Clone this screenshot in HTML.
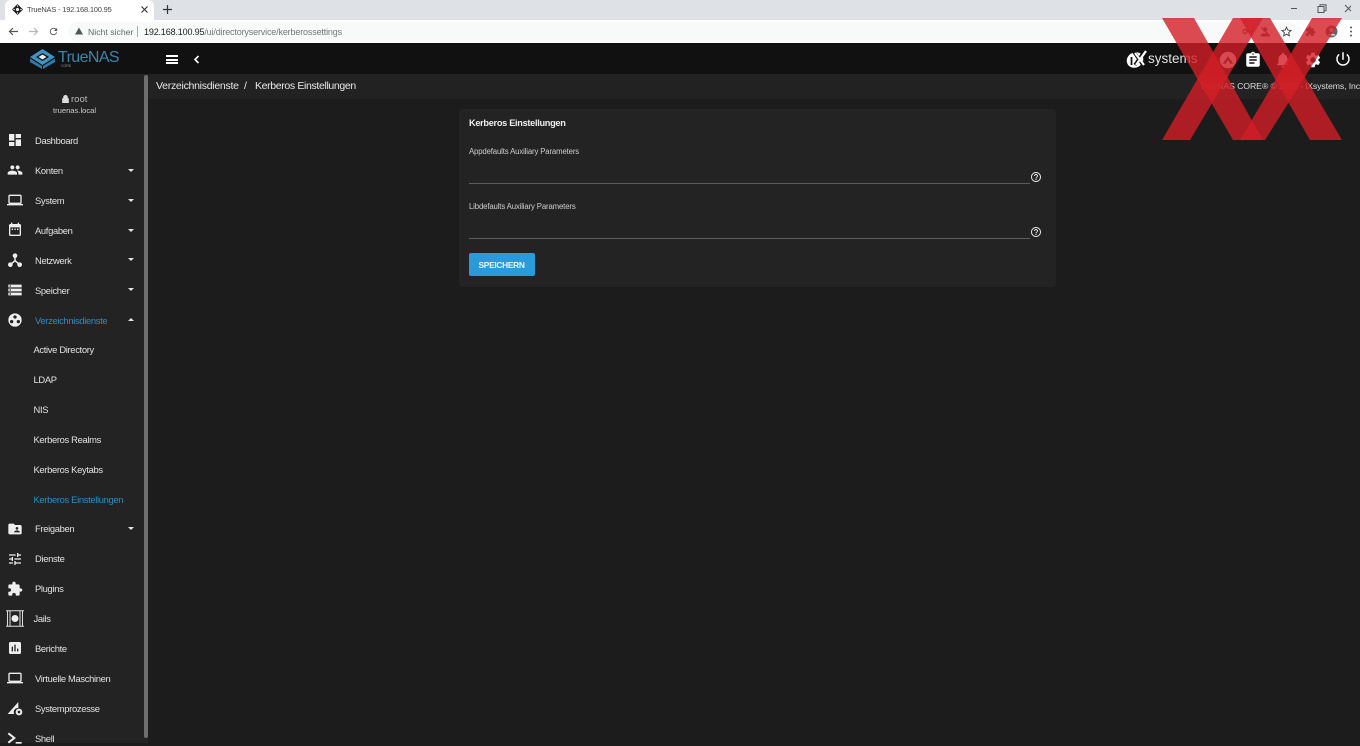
<!DOCTYPE html>
<html lang="de"><head><meta charset="utf-8"><title>TrueNAS - 192.168.100.95</title>
<style>
html,body{margin:0;padding:0;width:1360px;height:743px;overflow:hidden;background:#1c1c1c;font-family:"Liberation Sans",sans-serif;color:#e6e6e6}
div,span,svg{position:absolute}
.t{white-space:nowrap;font-size:9.5px;line-height:12px}
.s{margin-top:1px;font-size:9.4px;letter-spacing:-.33px;color:#e2e2e2}
.i{fill:#eee;width:16px;height:16px;left:7px}
.a{width:0;height:0;left:128px;border-left:3.5px solid transparent;border-right:3.5px solid transparent;border-top:3.5px solid #e4e4e4}
.l{height:1px;background:#5c5c5c;left:469px;width:561px}
.lb{font-size:7.8px;letter-spacing:-.15px;color:#ccc}
</style></head><body>
<!-- browser chrome -->
<div style="left:0;top:0;width:1360px;height:20px;background:#dee1e6"></div>
<div style="left:5px;top:0;width:149px;height:20px;background:#fff;border-radius:6px 6px 0 0"></div>
<svg style="left:12px;top:4px;width:11px;height:11px" viewBox="0 0 12 12"><path d="M6 0L12 6L6 12L0 6Z" fill="#222"/><circle cx="6" cy="6" r="1.7" fill="#fff"/><path d="M6 1.5V3M1.500 6H3M9 6h1.500M6 9v1.500" stroke="#fff"/></svg>
<span class="t" style="left:27px;top:4px;font-size:7.5px;letter-spacing:-.2px;color:#444">TrueNAS - 192.168.100.95</span>
<svg style="left:141px;top:6px;width:7px;height:7px" viewBox="0 0 7 7"><path d="M.5.5l6 6M6.500.5l-6 6" stroke="#333" stroke-width="1.100"/></svg>
<svg style="left:163px;top:5px;width:9px;height:9px" viewBox="0 0 9 9"><path d="M4.500 0v9M0 4.500h9" stroke="#333" stroke-width="1.200"/></svg>
<svg style="left:1291px;top:4px;width:60px;height:10px" viewBox="0 0 60 10"><path d="M0 4.500h6" stroke="#555"/><path d="M27 2.500h6v6h-6zM29 2.500V.8h6v6h-2" fill="none" stroke="#555"/><path d="M54 1l7 7M61 1l-7 7" stroke="#555"/></svg>
<div style="left:0;top:20px;width:1360px;height:23px;background:#fff"></div>
<div style="left:68px;top:22px;width:1230px;height:19px;background:#f8f9f9;border-radius:10px"></div>
<svg style="left:8px;top:26px;width:11px;height:11px" viewBox="0 0 11 11"><path d="M10 5.500H2M5 2L1.500 5.500L5 9" fill="none" stroke="#555" stroke-width="1.200"/></svg>
<svg style="left:28px;top:26px;width:11px;height:11px" viewBox="0 0 11 11"><path d="M1 5.500h8M6 2l3.500 3.500L6 9" fill="none" stroke="#b5b5b5" stroke-width="1.200"/></svg>
<svg style="left:48px;top:26px;width:11px;height:11px" viewBox="0 0 24 24"><path d="M17.650 6.350A7.958 7.958 0 0012 4c-4.420 0-7.990 3.580-7.990 8s3.570 8 7.990 8c3.730 0 6.840-2.550 7.730-6h-2.080A5.990 5.990 0 0112 18c-3.310 0-6-2.690-6-6s2.690-6 6-6c1.660 0 3.140.69 4.220 1.780L13 11h7V4l-2.350 2.350z" fill="#555"/></svg>
<svg style="left:75px;top:27px;width:8px;height:8px" viewBox="0 0 8 8"><path d="M4 .5L8 7.500H0Z" fill="#555"/></svg>
<span class="t" style="left:88px;top:26px;font-size:8.700px;color:#666">Nicht sicher</span>
<div style="left:137px;top:26px;width:1px;height:11px;background:#aaa"></div>
<span class="t" style="left:144px;top:26px;font-size:9px;letter-spacing:-.16px;color:#777"><span style="position:static;color:#222">192.168.100.95</span>/ui/directoryservice/kerberossettings</span>
<svg style="left:1242px;top:26px;width:11px;height:11px" viewBox="0 0 11 11"><circle cx="3" cy="5.500" r="2" fill="none" stroke="#555" stroke-width="1.200"/><path d="M5 5.500h6M9 5.500v2" stroke="#555" stroke-width="1.200"/></svg>
<svg style="left:1260px;top:26px;width:11px;height:11px" viewBox="0 0 11 11"><circle cx="5" cy="3.500" r="2.200" fill="#555"/><path d="M1 10c0-3 8-3 8 0zM1 1l9 9" fill="#555" stroke="#555"/></svg>
<svg style="left:1281px;top:26px;width:11px;height:11px" viewBox="0 0 24 24"><path d="M12 2.500l2.900 6.500 7.100.7-5.300 4.800 1.500 7-6.200-3.600-6.200 3.600 1.500-7L2 9.700l7.100-.7z" fill="none" stroke="#444" stroke-width="2"/></svg>
<svg style="left:1305px;top:26px;width:11px;height:11px;fill:#555" viewBox="0 0 24 24"><path d="M20.500 11H19V7c0-1.100-.9-2-2-2h-4V3.500C13 2.120 11.880 1 10.500 1S8 2.120 8 3.500V5H4c-1.100 0-1.990.9-1.990 2v3.800H3.500c1.490 0 2.700 1.210 2.700 2.700s-1.210 2.700-2.700 2.700H2V20c0 1.100.9 2 2 2h3.800v-1.500c0-1.490 1.210-2.700 2.700-2.700 1.490 0 2.700 1.210 2.700 2.700V22H17c1.100 0 2-.9 2-2v-4h1.500c1.380 0 2.500-1.120 2.500-2.500S21.880 11 20.500 11z"/></svg>
<svg style="left:1325px;top:25px;width:13px;height:13px" viewBox="0 0 13 13"><circle cx="6.500" cy="6.500" r="6" fill="#666"/><circle cx="6.500" cy="5" r="2" fill="#ddd"/><path d="M2.500 10.500c1-2.500 7-2.500 8 0" fill="#ddd"/></svg>
<svg style="left:1348px;top:26px;width:6px;height:11px" viewBox="0 0 6 11"><circle cx="3" cy="1.500" r="1" fill="#555"/><circle cx="3" cy="5.500" r="1" fill="#555"/><circle cx="3" cy="9.500" r="1" fill="#555"/></svg>
<!-- top bar -->
<div style="left:0;top:43px;width:1360px;height:31px;background:#111"></div>
<svg style="left:30px;top:49px;width:25px;height:20px" viewBox="0 0 25 20"><path d="M12.500 0L25 8 12.500 16 0 8Z" fill="#3f92c4"/><path d="M12.500 4L19 8 12.500 12 6 8Z" fill="#111"/><path d="M12.500 5.500L16.500 8 12.500 10.500 8.500 8Z" fill="#e8eef2"/><path d="M0 9.500L12 17V20L0 13ZM25 9.500L13 17V20L25 13Z" fill="#2e7cac"/></svg>
<span class="t" style="left:58px;top:47px;font-size:16px;letter-spacing:-.6px;line-height:22px;color:#3c85ad">TrueNAS</span>
<span class="t" style="left:61px;top:64px;font-size:3.500px;line-height:4px;color:#999">CORE</span>
<div style="left:166px;top:55px;width:12px;height:2px;background:#fff"></div>
<div style="left:166px;top:58.500px;width:12px;height:2px;background:#fff"></div>
<div style="left:166px;top:62px;width:12px;height:2px;background:#fff"></div>
<svg style="left:193px;top:55px;width:7px;height:9px" viewBox="0 0 7 9"><path d="M5.500 1L2 4.500 5.500 8" fill="none" stroke="#fff" stroke-width="1.600"/></svg>
<svg style="left:1126px;top:50px;width:22px;height:18px" viewBox="0 0 22 18"><ellipse cx="9" cy="10" rx="8.500" ry="7.500" fill="#fff" transform="rotate(-30 9 10)"/><path d="M5.500 7v8" stroke="#111" stroke-width="1.800"/><path d="M8 2l9 13M18 2L9 15" stroke="#111" stroke-width="3.500"/><path d="M9 3l9 12M20 1L10 15" stroke="#fff" stroke-width="2.200"/></svg>
<span class="t" style="left:1148px;top:50px;font-size:13.500px;line-height:18px;color:#e2e2e2">systems</span>
<svg style="left:1219px;top:51px;width:18px;height:18px" viewBox="0 0 24 24"><circle cx="12" cy="12" r="11" fill="#eee"/><path d="M5 17l7-10 7 10h-4l-3-5-3 5z" fill="#333"/></svg>
<svg style="left:1244px;top:51px;width:18px;height:18px;fill:#fff" viewBox="0 0 24 24"><path d="M19 3h-4.180C14.400 1.840 13.300 1 12 1c-1.300 0-2.400.84-2.820 2H5c-1.100 0-2 .9-2 2v14c0 1.100.9 2 2 2h14c1.100 0 2-.9 2-2V5c0-1.100-.9-2-2-2zm-7 0c.55 0 1 .45 1 1s-.45 1-1 1-1-.45-1-1 .45-1 1-1zm2 14H7v-2h7v2zm3-4H7v-2h10v2zm0-4H7V7h10v2z"/></svg>
<svg style="left:1274px;top:51px;width:18px;height:18px;fill:#fff" viewBox="0 0 24 24"><path d="M12 22c1.100 0 2-.9 2-2h-4c0 1.100.89 2 2 2zm6-6v-5c0-3.070-1.640-5.640-4.500-6.320V4c0-.83-.67-1.500-1.500-1.500s-1.500.67-1.500 1.500v.68C7.630 5.360 6 7.920 6 11v5l-2 2v1h16v-1l-2-2z"/></svg>
<svg style="left:1304px;top:51px;width:18px;height:18px;fill:#fff" viewBox="0 0 24 24"><path d="M19.140 12.940c.04-.3.06-.61.06-.94 0-.32-.02-.64-.07-.94l2.030-1.580c.18-.14.23-.41.12-.61l-1.920-3.320c-.12-.22-.37-.29-.59-.22l-2.390.96c-.5-.38-1.030-.7-1.620-.94l-.36-2.540c-.04-.24-.24-.41-.48-.41h-3.840c-.24 0-.43.17-.47.41l-.36 2.540c-.59.24-1.130.57-1.620.94l-2.390-.96c-.22-.08-.47 0-.59.22L2.740 8.870c-.12.21-.08.47.12.61l2.030 1.580c-.05.3-.09.63-.09.94s.02.64.07.94l-2.030 1.580c-.18.14-.23.41-.12.61l1.920 3.320c.12.22.37.29.59.22l2.390-.96c.5.38 1.030.7 1.620.94l.36 2.540c.05.24.24.41.48.41h3.840c.24 0 .44-.17.47-.41l.36-2.540c.59-.24 1.130-.56 1.620-.94l2.390.96c.22.08.47 0 .59-.22l1.920-3.320c.12-.22.07-.47-.12-.61l-2.010-1.580zM12 15.600c-1.980 0-3.600-1.620-3.600-3.600s1.620-3.600 3.600-3.600 3.600 1.620 3.600 3.600-1.620 3.600-3.600 3.600z"/></svg>
<svg style="left:1334px;top:50px;width:18px;height:18px;fill:#fff" viewBox="0 0 24 24"><path d="M13 3h-2v10h2V3zm4.830 2.170l-1.420 1.420C17.990 7.860 19 9.810 19 12c0 3.870-3.130 7-7 7s-7-3.130-7-7c0-2.190 1.010-4.140 2.580-5.420L6.170 5.170C4.230 6.820 3 9.260 3 12c0 4.970 4.030 9 9 9s9-4.030 9-9c0-2.740-1.230-5.180-3.170-6.830z"/></svg>
<!-- breadcrumb bar -->
<div style="left:148px;top:74px;width:1212px;height:25px;background:#222"></div>
<span class="t" style="left:156px;top:80px;font-size:10.500px;letter-spacing:-.27px;color:#e8e8e8">Verzeichnisdienste</span>
<span class="t" style="left:244px;top:80px;font-size:10.500px;color:#e8e8e8">/</span>
<span class="t" style="left:255px;top:80px;font-size:10.500px;letter-spacing:-.35px;color:#e8e8e8">Kerberos Einstellungen</span>
<span class="t" style="right:0;top:80px;font-size:8.700px;letter-spacing:-.1px;color:#ddd">TrueNAS CORE® © 2020 - iXsystems, Inc</span>
<!-- sidebar -->
<div style="left:0;top:74px;width:148px;height:669px;background:#232323"></div>
<div style="left:144px;top:75px;width:4px;height:663px;background:#6e6e6e;border-radius:2px"></div>
<svg style="left:62px;top:95px;width:7px;height:8px" viewBox="0 0 7 8"><path d="M1.500 3.500V2.300a2 2 0 014 0v1.200M.5 3.500h6V8h-6z" fill="#ddd" stroke="#ddd" stroke-width=".6"/></svg>
<span class="t" style="left:71px;top:94px;color:#bbb">root</span>
<span class="t" style="left:53px;top:105px;font-size:7.600px;color:#ccc">truenas.local</span>
<span class="t s" style="left:35px;top:134px">Dashboard</span>
<span class="t s" style="left:35px;top:164px">Konten</span>
<span class="t s" style="left:35px;top:194px">System</span>
<span class="t s" style="left:35px;top:224px">Aufgaben</span>
<span class="t s" style="left:35px;top:253.500px">Netzwerk</span>
<span class="t s" style="left:35px;top:283.500px">Speicher</span>
<span class="t s" style="left:35px;top:313.500px;color:#2f8cc4">Verzeichnisdienste</span>
<span class="t s" style="left:33.500px;top:343px">Active Directory</span>
<span class="t s" style="left:33.500px;top:373px">LDAP</span>
<span class="t s" style="left:33.500px;top:403px">NIS</span>
<span class="t s" style="left:33.500px;top:433px">Kerberos Realms</span>
<span class="t s" style="left:33.500px;top:462.500px">Kerberos Keytabs</span>
<span class="t s" style="left:33.500px;top:492.500px;color:#2f8cc4">Kerberos Einstellungen</span>
<span class="t s" style="left:35px;top:522px">Freigaben</span>
<span class="t s" style="left:35px;top:552px">Dienste</span>
<span class="t s" style="left:35px;top:582px">Plugins</span>
<span class="t s" style="left:33.500px;top:612px">Jails</span>
<span class="t s" style="left:35px;top:642px">Berichte</span>
<span class="t s" style="left:35px;top:672px">Virtuelle Maschinen</span>
<span class="t s" style="left:35px;top:702px">Systemprozesse</span>
<span class="t s" style="left:35px;top:731.500px">Shell</span>
<div class="a" style="top:169px"></div><div class="a" style="top:199px"></div><div class="a" style="top:229px"></div><div class="a" style="top:258px"></div><div class="a" style="top:288px"></div><div class="a" style="top:527px"></div>
<div class="a" style="top:318px;border-top:0;border-bottom:3.500px solid #e4e4e4"></div>
<svg class="i" style="top:132px" viewBox="0 0 24 24"><path d="M3 13h8V3H3v10zm0 8h8v-6H3v6zm10 0h8V11h-8v10zm0-18v6h8V3h-8z"/></svg>
<svg class="i" style="top:162px" viewBox="0 0 24 24"><path d="M16 11c1.660 0 2.990-1.340 2.990-3S17.660 5 16 5c-1.660 0-3 1.340-3 3s1.340 3 3 3zm-8 0c1.660 0 2.990-1.340 2.990-3S9.660 5 8 5C6.340 5 5 6.340 5 8s1.340 3 3 3zm0 2c-2.330 0-7 1.170-7 3.500V19h14v-2.500c0-2.330-4.670-3.500-7-3.500zm8 0c-.29 0-.62.02-.97.05 1.160.84 1.970 1.970 1.970 3.450V19h6v-2.500c0-2.330-4.670-3.500-7-3.500z"/></svg>
<svg class="i" style="top:192px" viewBox="0 0 24 24"><path d="M20 18c1.100 0 1.990-.9 1.990-2L22 6c0-1.100-.9-2-2-2H4c-1.100 0-2 .9-2 2v10c0 1.100.9 2 2 2H0v2h24v-2h-4zM4 6h16v10H4V6z"/></svg>
<svg class="i" style="top:222px" viewBox="0 0 24 24"><path d="M19 3h-1V1h-2v2H8V1H6v2H5c-1.110 0-2 .9-2 2v14c0 1.100.89 2 2 2h14c1.100 0 2-.9 2-2V5c0-1.100-.9-2-2-2zm0 16H5V8h14v11zM7 10h2v2H7zm4 0h2v2h-2zm4 0h2v2h-2z"/></svg>
<svg class="i" style="top:252px" viewBox="0 0 24 24"><circle cx="12" cy="5.500" r="3.500"/><circle cx="5" cy="19" r="3.500"/><circle cx="19" cy="19" r="3.500"/><path d="M12 6v7.500M12 13l-7 6M12 13l7 6" stroke="#eee" stroke-width="2.200" fill="none"/></svg>
<svg class="i" style="top:282px" viewBox="0 0 24 24"><path d="M2 20h20v-4H2v4zm2-3h2v2H4v-2zM2 4v4h20V4H2zm4 3H4V5h2v2zm-4 7h20v-4H2v4zm2-3h2v2H4v-2z"/></svg>
<svg class="i" style="top:312px" viewBox="0 0 24 24"><path fill-rule="evenodd" d="M12 2a10 10 0 100 20 10 10 0 000-20zm0 3a2.500 2.500 0 110 5 2.500 2.500 0 010-5zM7 12a2.500 2.500 0 110 5 2.500 2.500 0 010-5zm10 0a2.500 2.500 0 110 5 2.500 2.500 0 010-5z"/></svg>
<svg class="i" style="top:521px" viewBox="0 0 24 24"><path d="M20 6h-8l-2-2H4c-1.100 0-2 .9-2 2v12c0 1.100.9 2 2 2h16c1.100 0 2-.9 2-2V8c0-1.100-.9-2-2-2zm-5 3c1.100 0 2 .9 2 2s-.9 2-2 2-2-.9-2-2 .9-2 2-2zm4 8h-8v-1c0-1.330 2.670-2 4-2s4 .67 4 2v1z"/></svg>
<svg class="i" style="top:551px" viewBox="0 0 24 24"><path d="M3 17v2h6v-2H3zM3 5v2h10V5H3zm10 16v-2h8v-2h-8v-2h-2v6h2zM7 9v2H3v2h4v2h2V9H7zm14 4v-2H11v2h10zm-6-4h2V7h4V5h-4V3h-2v6z"/></svg>
<svg class="i" style="top:581px" viewBox="0 0 24 24"><path d="M20.500 11H19V7c0-1.100-.9-2-2-2h-4V3.500C13 2.120 11.880 1 10.500 1S8 2.120 8 3.500V5H4c-1.100 0-1.990.9-1.990 2v3.800H3.500c1.490 0 2.700 1.210 2.700 2.700s-1.210 2.700-2.700 2.700H2V20c0 1.100.9 2 2 2h3.800v-1.500c0-1.490 1.210-2.700 2.700-2.700 1.490 0 2.700 1.210 2.700 2.700V22H17c1.100 0 2-.9 2-2v-4h1.500c1.380 0 2.500-1.120 2.500-2.500S21.880 11 20.500 11z"/></svg>
<svg style="left:6px;top:610px;width:18px;height:17px" viewBox="0 0 18 17"><path d="M0 .7h18M0 16.300h18M1.500 1v15M4 1v15M14 1v15M16.500 1v15" stroke="#ddd" fill="none"/><circle cx="9" cy="8.500" r="3.500" fill="#eee"/></svg>
<svg class="i" style="top:640px" viewBox="0 0 24 24"><path d="M19 3H5c-1.100 0-2 .9-2 2v14c0 1.100.9 2 2 2h14c1.100 0 2-.9 2-2V5c0-1.100-.9-2-2-2zM9 17H7v-7h2v7zm4 0h-2V7h2v10zm4 0h-2v-4h2v4z"/></svg>
<svg class="i" style="top:670px" viewBox="0 0 24 24"><path d="M20 18c1.100 0 1.990-.9 1.990-2L22 6c0-1.100-.9-2-2-2H4c-1.100 0-2 .9-2 2v10c0 1.100.9 2 2 2H0v2h24v-2h-4zM4 6h16v10H4V6z"/></svg>
<svg class="i" style="top:700px" viewBox="0 0 24 24"><path d="M1 21L17 3v9a6 6 0 00-6 9z"/><circle cx="18" cy="18" r="3.500" fill="none" stroke="#eee" stroke-width="3"/></svg>
<svg class="i" style="top:730px" viewBox="0 0 24 24"><path d="M2 5l9 7-9 7" fill="none" stroke="#eee" stroke-width="3"/><path d="M13 18h9v2.500h-9z"/></svg>
<!-- card -->
<div style="left:459px;top:109px;width:597px;height:178px;background:#232323;border-radius:3px"></div>
<span class="t" style="left:469px;top:117px;font-size:9.200px;letter-spacing:-.3px;font-weight:bold;color:#eee">Kerberos Einstellungen</span>
<span class="t lb" style="left:469px;top:146px">Appdefaults Auxiliary Parameters</span>
<div class="l" style="top:183px"></div>
<span class="t lb" style="left:469px;top:201px">Libdefaults Auxiliary Parameters</span>
<div class="l" style="top:238px"></div>
<svg style="left:1030px;top:171px;width:12px;height:12px;fill:#e6e6e6" viewBox="0 0 24 24"><path d="M11 18h2v-2h-2v2zm1-16C6.480 2 2 6.480 2 12s4.480 10 10 10 10-4.480 10-10S17.520 2 12 2zm0 18c-4.410 0-8-3.590-8-8s3.590-8 8-8 8 3.590 8 8-3.590 8-8 8zm0-14c-2.210 0-4 1.790-4 4h2c0-1.100.9-2 2-2s2 .9 2 2c0 2-3 1.750-3 5h2c0-2.250 3-2.500 3-5 0-2.210-1.790-4-4-4z"/></svg>
<svg style="left:1030px;top:226px;width:12px;height:12px;fill:#e6e6e6" viewBox="0 0 24 24"><path d="M11 18h2v-2h-2v2zm1-16C6.480 2 2 6.480 2 12s4.480 10 10 10 10-4.480 10-10S17.520 2 12 2zm0 18c-4.410 0-8-3.590-8-8s3.590-8 8-8 8 3.590 8 8-3.590 8-8 8zm0-14c-2.210 0-4 1.790-4 4h2c0-1.100.9-2 2-2s2 .9 2 2c0 2-3 1.750-3 5h2c0-2.250 3-2.500 3-5 0-2.210-1.790-4-4-4z"/></svg>
<div style="left:469px;top:253px;width:66px;height:23px;background:#2a9bd8;border-radius:2px"></div>
<span class="t" style="left:478.500px;top:258.500px;font-size:8.400px;letter-spacing:-.3px;font-weight:bold;color:#e8f6ff">SPEICHERN</span>
<!-- red XX overlay -->
<svg style="left:0;top:0;width:1360px;height:743px" viewBox="0 0 1360 743">
<g fill="#d21e26" fill-opacity=".8">
<path d="M1162 18H1194L1263 140H1233Z"/>
<path d="M1233 18H1263L1190 140H1162Z"/>
<path d="M1240 18H1270L1342 140H1310Z"/>
<path d="M1312 18H1342L1265 140H1240Z"/>
</g></svg>
</body></html>
